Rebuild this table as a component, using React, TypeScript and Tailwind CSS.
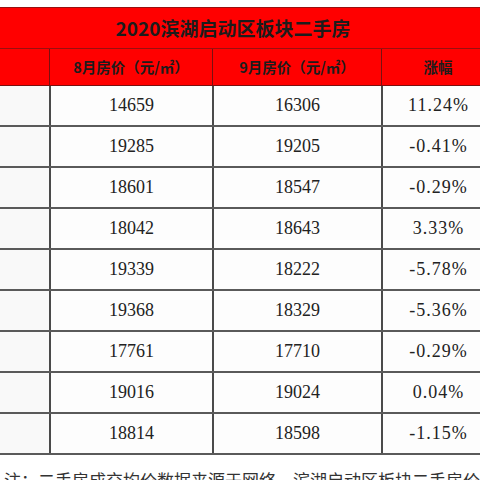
const rows = [
  ["14659", "16306", "11.24%"],
  ["19285", "19205", "-0.41%"],
  ["18601", "18547", "-0.29%"],
  ["18042", "18643", "3.33%"],
  ["19339", "18222", "-5.78%"],
  ["19368", "18329", "-5.36%"],
  ["17761", "17710", "-0.29%"],
  ["19016", "19024", "0.04%"],
  ["18814", "18598", "-1.15%"],
];

const cjk = { fontFamily: '"Noto Sans CJK SC", "Noto Sans", sans-serif' };
const num = { fontFamily: '"Liberation Serif", "Noto Sans CJK SC", serif' };

export default function App() {
  return (
    <div className="h-[480px] w-[480px] overflow-hidden bg-white">
      <div className="w-[494px] pt-[7px]">
        {/* title */}
        <div
          className="flex h-[42px] items-center justify-center border-t border-b border-[#9a1010] bg-[#ff0000] pr-[28px] text-[19px] font-bold text-[#1c1c1c]"
          style={cjk}
        >
          2020滨湖启动区板块二手房
        </div>
        {/* header */}
        <div
          className="grid h-[37px] grid-cols-[50px_163px_169px_112px] border-b border-[#7a1010] bg-[#ff0000] text-[14.5px] font-bold text-[#1c1c1c]"
          style={cjk}
        >
          <div className="border-r border-[#7a1010]" />
          <div className="flex items-center justify-center border-r border-[#7a1010]">
            8月房价（元/㎡）
          </div>
          <div className="flex items-center justify-center border-r border-[#7a1010]">
            9月房价（元/㎡）
          </div>
          <div className="flex items-center justify-center">涨幅</div>
        </div>
        {/* data */}
        {rows.map((r, i) => (
          <div
            key={i}
            className="grid h-[41px] grid-cols-[51px_163px_169px_111px] border-b-2 border-[#5a5a5a] bg-[#fdfdfd] text-[18px] text-[#222]"
            style={num}
          >
            <div className="border-r-2 border-[#4a4a4a] bg-[#f9f9f9]" />
            <div className="flex items-center justify-center border-r-2 border-[#4a4a4a]">
              {r[0]}
            </div>
            <div className="flex items-center justify-center border-r-2 border-[#4a4a4a]">
              {r[1]}
            </div>
            <div className="flex items-center justify-center tracking-[1px]">{r[2]}</div>
          </div>
        ))}
        <div
          className="mt-[13px] whitespace-nowrap pl-[4px] text-[17px] leading-[24px] text-[#333]"
          style={cjk}
        >
          注：二手房成交均价数据来源于网络，滨湖启动区板块二手房价格统计
        </div>
      </div>
    </div>
  );
}
